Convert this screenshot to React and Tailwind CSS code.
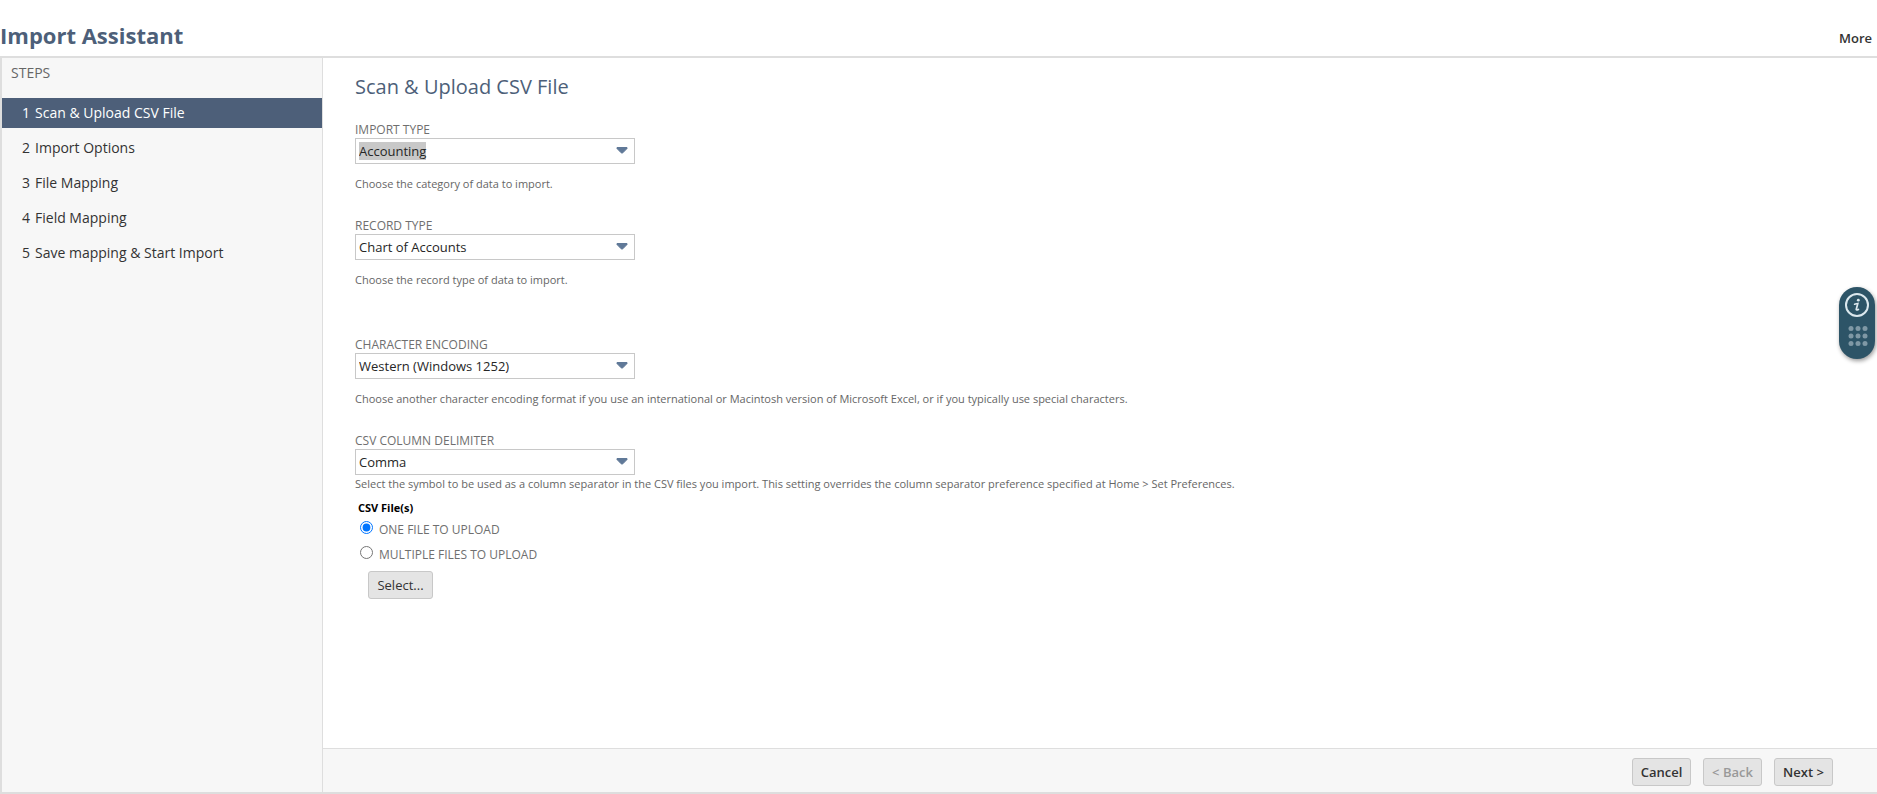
import { useState } from "react";

const STEPS = [
  "Scan & Upload CSV File",
  "Import Options",
  "File Mapping",
  "Field Mapping",
  "Save mapping & Start Import",
];

function Sidebar({ current }) {
  return (
    <nav className="w-[321px] shrink-0 bg-[#f7f7f7] border-r border-[#dedede] pt-[5px]">
      <h2 className="px-[9px] text-[14px] leading-5 text-[#666666]">STEPS</h2>
      <ol className="mt-[15px] flex flex-col gap-[5px]">
        {STEPS.map((step, i) => (
          <li key={step}>
            <a
              href={`#step-${i + 1}`}
              aria-current={i === current ? "step" : undefined}
              className={`flex h-[30px] items-center gap-[5px] pl-5 text-[14px] leading-5 ${
                i === current ? "bg-[#4d5f79] text-white" : "text-[#333333]"
              }`}
            >
              <span>{i + 1}</span>
              <span>{step}</span>
            </a>
          </li>
        ))}
      </ol>
    </nav>
  );
}

function SelectField({ id, label, options, help, helpClass = "mt-3", selectClass = "" }) {
  return (
    <div>
      <label htmlFor={id} className="block text-[12px] leading-4 text-[#6f6f6f]">
        {label}
      </label>
      <div className="relative w-[280px]">
        <select
          id={id}
          className={`block h-[26px] w-full appearance-none border border-[#c8c8c8] bg-white px-[3px] text-[13px] leading-[18px] text-[#262626] outline-none ${selectClass}`}
        >
          {options.map((o) => (
            <option key={o}>{o}</option>
          ))}
        </select>
        <svg
          viewBox="0 0 12 8"
          className="pointer-events-none absolute top-[9px] right-[7px] h-2 w-3"
          aria-hidden="true"
        >
          <path
            d="M1 0.5 H11 V1.5 L6.8 5.8 Q6 6.5 5.2 5.8 L1 1.5 Z"
            fill="#607998"
            stroke="#607998"
            strokeWidth="1"
            strokeLinejoin="round"
          />
        </svg>
      </div>
      <p className={`text-[11px] leading-4 text-[#666666] ${helpClass}`}>{help}</p>
    </div>
  );
}

function UploadOption({ value, selected, onChange, children }) {
  return (
    <label className="flex h-[25px] items-center gap-1.5 text-[12px] leading-[18px] text-[#6f6f6f]">
      <input
        type="radio"
        name="upload"
        value={value}
        checked={selected === value}
        onChange={() => onChange(value)}
        className="mb-1 h-[13px] w-[13px]"
      />
      {children}
    </label>
  );
}

function Button({ className = "", ...props }) {
  return (
    <button
      type="button"
      className={`h-7 rounded-[3px] border border-[#c8c8c8] bg-[#e4e4e4] text-[13px] leading-[18px] text-[#333333] disabled:text-[#999999] ${className}`}
      {...props}
    />
  );
}

function HelpWidget() {
  return (
    <button
      type="button"
      aria-label="Help"
      className="fixed top-[287px] right-0.5 h-[72px] w-9 rounded-full bg-[#2d5467] shadow-[1px_2px_4px_rgba(0,0,0,0.4)]"
    >
      <svg viewBox="0 0 36 72" className="h-[72px] w-9" aria-hidden="true">
        <circle cx="18" cy="18" r="11" fill="none" stroke="#dce8ee" strokeWidth="2" />
        <circle cx="19.3" cy="13.2" r="1.4" fill="#dce8ee" />
        <path
          d="M15.6 17.2 Q17.4 16.7 18.8 16.5 L17.3 22.2 Q17 23.6 19.4 22.4"
          fill="none"
          stroke="#dce8ee"
          strokeWidth="1.7"
          strokeLinecap="round"
        />
        {[41.5, 49, 56.5].map((y) =>
          [12, 19, 26].map((x) => (
            <circle key={`${x}-${y}`} cx={x} cy={y} r="2.5" fill="#7f98a5" />
          ))
        )}
      </svg>
    </button>
  );
}

export default function App() {
  const [upload, setUpload] = useState("one");

  return (
    <div className="flex min-h-screen flex-col bg-white font-['Open_Sans',sans-serif]">
      <header className="flex h-14 items-end justify-between pr-[5px] pb-1.5">
        <h1 className="text-[22px] leading-[30px] font-bold text-[#4d5f79]">Import Assistant</h1>
        <a href="#more" className="pb-[3px] text-[13px] leading-[18px] font-semibold text-[#333333]">
          More
        </a>
      </header>

      <div className="flex grow border-y-2 border-l-2 border-[#dedede]">
        <Sidebar current={0} />

        <div className="flex grow flex-col">
          <main className="grow px-8 pt-[17px] pb-6">
            <h2 className="mb-[23px] text-[20px] leading-6 text-[#4d5f79]">
              Scan &amp; Upload CSV File
            </h2>

            <div className="flex flex-col gap-[26px]">
              <SelectField
                id="import-type"
                label="IMPORT TYPE"
                options={["Accounting"]}
                help="Choose the category of data to import."
                selectClass="bg-[linear-gradient(#c8c8c8,#c8c8c8)] bg-[length:67px_18px] bg-[position:3px_3px] bg-no-repeat"
              />
              <SelectField
                id="record-type"
                label="RECORD TYPE"
                options={["Chart of Accounts"]}
                help="Choose the record type of data to import."
              />
            </div>

            <div className="mt-[49px] flex flex-col gap-[26px]">
              <SelectField
                id="encoding"
                label="CHARACTER ENCODING"
                options={["Western (Windows 1252)"]}
                help="Choose another character encoding format if you use an international or Macintosh version of Microsoft Excel, or if you typically use special characters."
              />
              <SelectField
                id="delimiter"
                label="CSV COLUMN DELIMITER"
                options={["Comma"]}
                help="Select the symbol to be used as a column separator in the CSV files you import. This setting overrides the column separator preference specified at Home > Set Preferences."
                helpClass="mt-px"
              />
            </div>

            <fieldset className="mt-2 pl-[3px]">
              <legend className="text-[11px] leading-4 font-bold text-black">CSV File(s)</legend>
              <div className="pt-px pl-0.5">
                <UploadOption value="one" selected={upload} onChange={setUpload}>
                  ONE FILE TO UPLOAD
                </UploadOption>
                <UploadOption value="multiple" selected={upload} onChange={setUpload}>
                  MULTIPLE FILES TO UPLOAD
                </UploadOption>
              </div>
              <Button className="mt-1 ml-2.5 w-[65px]">Select...</Button>
            </fieldset>
          </main>

          <footer className="flex justify-end gap-3 border-t border-[#dedede] bg-[#f7f7f7] pt-[9px] pr-11 pb-1.5">
            <Button className="w-[59px] font-semibold">Cancel</Button>
            <Button className="w-[59px] font-semibold" disabled>
              &lt; Back
            </Button>
            <Button className="w-[59px] font-semibold">Next &gt;</Button>
          </footer>
        </div>
      </div>

      <HelpWidget />
    </div>
  );
}
